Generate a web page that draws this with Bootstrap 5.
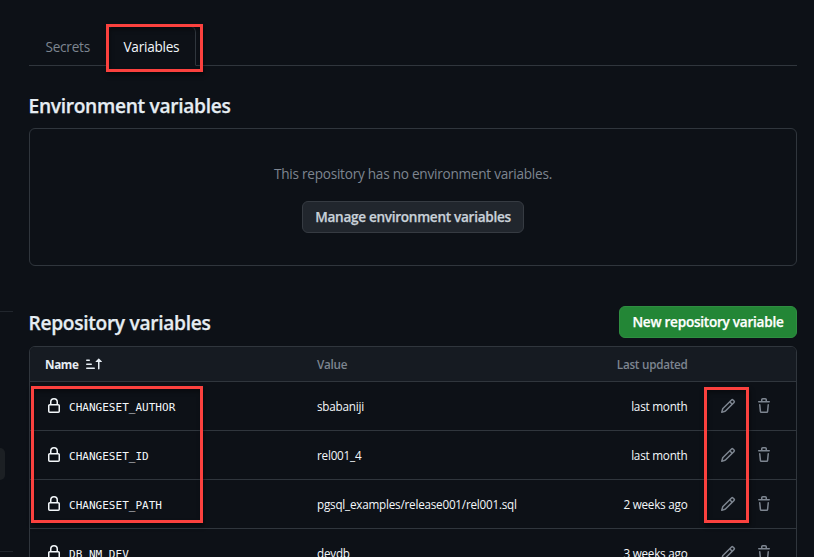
<!DOCTYPE html>
<html lang="en" data-bs-theme="dark">
<head>
<meta charset="utf-8">
<meta name="viewport" content="width=device-width, initial-scale=1">
<title>Actions variables</title>
<link href="https://cdn.jsdelivr.net/npm/bootstrap@5.3.0/dist/css/bootstrap.min.css" rel="stylesheet">
<style>
  :root { --line: #30363d; --fg: #e6edf3; --muted: #7d8590; --canvas: #0d1117; --red: #fb413e; }
  html, body { height: 557px; overflow: hidden; }
  body { background: var(--canvas); color: var(--fg); font-family: "Open Sans", "Noto Sans", sans-serif; font-size: 13.6px; line-height: 20px; letter-spacing: -.25px; }
  svg { fill: currentColor; display: block; flex: none; }
  .rail { width: 29px; flex: none; padding-top: 311px; }
  .rail-line { width: 13px; height: 1px; background: #21262d; }
  .rail-pill { width: 5px; height: 32px; margin: 136px 0 71px; background: #1c2024; border-radius: 0 6px 6px 0; }
  .pane { width: 768px; flex: none; padding-top: 26px; }
  .nav-tabs { --bs-nav-tabs-border-color: var(--line); height: 40px; }
  .nav-tabs .nav-link { height: 40px; padding: 10px 14px 9px 15.5px; border-radius: 6px 6px 0 0; color: var(--muted); line-height: 20px; }
  .nav-tabs .nav-link.active { background: var(--canvas); color: #f3f7fa; border-color: #262b32 var(--line) var(--canvas); }
  .tab-secrets { width: 78px; }
  .tab-variables { width: 89px; }
  .sect-title { font-size: 19.2px; font-weight: 600; line-height: 28px; margin: 0 0 0 -.5px; padding-top: 2px; letter-spacing: -.32px; color: var(--fg); -webkit-text-stroke: .25px currentColor; }
  .blank-box { border: 1px solid var(--line); border-radius: 6px; height: 138px; padding-top: 35px; color: var(--muted); }
  .btn { height: 32px; padding: 0; font-size: 13.6px; font-weight: 600; line-height: 20px; border-radius: 6px; letter-spacing: -.26px; -webkit-text-stroke: .25px currentColor; }
  .btn-manage { width: 222px; background: #21262d; border-color: #363b42; color: #c9d1d9; letter-spacing: -.3px; }
  .btn-new { width: 178px; background: #238636; border-color: #2f8e41; color: #fff; }
  .blank-text { margin-bottom: 17px; }
  .repo-head { margin-top: 40px; }
  .vars { border: 1px solid var(--line); border-radius: 6px 6px 0 0; font-size: 11.7px; letter-spacing: -.22px; }
  .vars-head { height: 34px; padding-left: 15px; background: #161b22; border-radius: 5px 5px 0 0; font-weight: 600; color: var(--muted); letter-spacing: -.27px; }
  .vars-head .c-name { width: 272px; color: var(--fg); }
  .vars-head .c-name span { font-weight: 700; letter-spacing: -.35px; }
  .vars-row { height: 49px; padding-left: 16px; border-top: 1px solid var(--line); color: #f3f7fa; }
  .c-name { width: 271px; gap: 7px; }
  .c-value { width: 220px; }
  .c-date { width: 150.5px; }
  .code-name { padding-top: 3px; font-family: "DejaVu Sans Mono", monospace; font-size: 11px; letter-spacing: .02px; }
  .row-tools { color: var(--muted); gap: 20px; margin-left: 32.5px; }
  .callout { position: absolute; border: 3px solid var(--red); box-shadow: 1px 3px 4px rgba(0,0,0,.5), inset 1px 3px 4px rgba(0,0,0,.35); pointer-events: none; }
  .callout-tab { left: 106px; top: 24px; width: 97px; height: 48px; }
  .callout-names { left: 31px; top: 386px; width: 172px; height: 137px; }
  .callout-edit { left: 704px; top: 387px; width: 45px; height: 136px; }
</style>
</head>
<body>
<svg width="0" height="0" class="position-absolute" aria-hidden="true">
  <symbol id="lock" viewBox="0 0 16 16"><path d="M4 4a4 4 0 0 1 8 0v2h.25c.966 0 1.75.784 1.75 1.75v5.5A1.75 1.75 0 0 1 12.25 15h-8.5A1.75 1.75 0 0 1 2 13.25v-5.5C2 6.784 2.784 6 3.75 6H4Zm8.25 3.5h-8.5a.25.25 0 0 0-.25.25v5.5c0 .138.112.25.25.25h8.5a.25.25 0 0 0 .25-.25v-5.5a.25.25 0 0 0-.25-.25ZM10.5 6V4a2.5 2.5 0 1 0-5 0v2Z"/></symbol>
  <symbol id="pencil" viewBox="0 0 16 16"><path d="M11.013 1.427a1.75 1.75 0 0 1 2.474 0l1.086 1.086a1.75 1.75 0 0 1 0 2.474l-8.61 8.61c-.21.21-.47.364-.756.445l-3.251.93a.75.75 0 0 1-.927-.928l.929-3.25c.081-.286.235-.547.445-.758l8.61-8.61Zm.176 4.823L9.75 4.81l-6.286 6.287a.253.253 0 0 0-.064.108l-.558 1.953 1.953-.558a.253.253 0 0 0 .108-.064Zm1.238-3.763a.25.25 0 0 0-.354 0L10.811 3.75l1.439 1.44 1.263-1.263a.25.25 0 0 0 0-.354Z"/></symbol>
  <symbol id="trash" viewBox="0 0 16 16"><path d="M11 1.75V3h2.25a.75.75 0 0 1 0 1.5H2.75a.75.75 0 0 1 0-1.5H5V1.75C5 .784 5.784 0 6.75 0h2.5C10.216 0 11 .784 11 1.75ZM4.496 6.675l.66 6.6a.25.25 0 0 0 .249.225h5.19a.25.25 0 0 0 .249-.225l.66-6.6a.75.75 0 0 1 1.492.149l-.66 6.6A1.748 1.748 0 0 1 10.595 15h-5.19a1.75 1.75 0 0 1-1.741-1.575l-.66-6.6a.75.75 0 1 1 1.492-.15ZM6.5 1.75V3h3V1.75a.25.25 0 0 0-.25-.25h-2.5a.25.25 0 0 0-.25.25Z"/></symbol>
</svg>
<div class="d-flex">
  <div class="rail">
    <div class="rail-line"></div>
    <div class="rail-pill"></div>
    <div class="rail-line"></div>
  </div>
  <main class="pane">
    <ul class="nav nav-tabs">
      <li class="nav-item tab-secrets"><a class="nav-link" href="#">Secrets</a></li>
      <li class="nav-item tab-variables"><a class="nav-link active" href="#">Variables</a></li>
    </ul>
    <h2 class="sect-title mt-4">Environment variables</h2>
    <div class="blank-box mt-2 d-flex flex-column align-items-center">
      <p class="blank-text">This repository has no environment variables.</p>
      <button class="btn btn-manage" type="button">Manage environment variables</button>
    </div>
    <div class="repo-head d-flex justify-content-between align-items-center mb-2">
      <h2 class="sect-title">Repository variables</h2>
      <button class="btn btn-new" type="button">New repository variable</button>
    </div>
    <div class="vars">
      <div class="vars-head d-flex align-items-center">
        <div class="c-name d-flex align-items-center"><span>Name</span><svg width="16" height="16" viewBox="0 0 16 16"><path d="m12.927 2.573 3 3A.25.25 0 0 1 15.75 6H13.5v6.75a.75.75 0 0 1-1.5 0V6H9.75a.25.25 0 0 1-.177-.427l3-3a.25.25 0 0 1 .354 0ZM0 12.25a.75.75 0 0 1 .75-.75h7.5a.75.75 0 0 1 0 1.5H.75a.75.75 0 0 1-.75-.75Zm0-4a.75.75 0 0 1 .75-.75h4.5a.75.75 0 0 1 0 1.5h-4.5A.75.75 0 0 1 0 8.25Zm0-4a.75.75 0 0 1 .75-.75h2.5a.75.75 0 0 1 0 1.5H.75A.75.75 0 0 1 0 4.25Z"/></svg></div>
        <div class="c-value">Value</div>
        <div class="c-date text-end">Last updated</div>
      </div>
      <div class="vars-row d-flex align-items-center">
        <div class="c-name d-flex align-items-center"><svg width="16" height="16"><use href="#lock"/></svg><span class="code-name">CHANGESET_AUTHOR</span></div>
        <div class="c-value">sbabaniji</div>
        <div class="c-date text-end">last month</div>
        <div class="row-tools d-flex"><svg width="16" height="16"><use href="#pencil"/></svg><svg width="16" height="16"><use href="#trash"/></svg></div>
      </div>
      <div class="vars-row d-flex align-items-center">
        <div class="c-name d-flex align-items-center"><svg width="16" height="16"><use href="#lock"/></svg><span class="code-name">CHANGESET_ID</span></div>
        <div class="c-value">rel001_4</div>
        <div class="c-date text-end">last month</div>
        <div class="row-tools d-flex"><svg width="16" height="16"><use href="#pencil"/></svg><svg width="16" height="16"><use href="#trash"/></svg></div>
      </div>
      <div class="vars-row d-flex align-items-center">
        <div class="c-name d-flex align-items-center"><svg width="16" height="16"><use href="#lock"/></svg><span class="code-name">CHANGESET_PATH</span></div>
        <div class="c-value">pgsql_examples/release001/rel001.sql</div>
        <div class="c-date text-end">2 weeks ago</div>
        <div class="row-tools d-flex"><svg width="16" height="16"><use href="#pencil"/></svg><svg width="16" height="16"><use href="#trash"/></svg></div>
      </div>
      <div class="vars-row d-flex align-items-center">
        <div class="c-name d-flex align-items-center"><svg width="16" height="16"><use href="#lock"/></svg><span class="code-name">DB_NM_DEV</span></div>
        <div class="c-value">devdb</div>
        <div class="c-date text-end">3 weeks ago</div>
        <div class="row-tools d-flex"><svg width="16" height="16"><use href="#pencil"/></svg><svg width="16" height="16"><use href="#trash"/></svg></div>
      </div>
    </div>
  </main>
</div>
<div class="callout callout-tab"></div>
<div class="callout callout-names"></div>
<div class="callout callout-edit"></div>
</body>
</html>
